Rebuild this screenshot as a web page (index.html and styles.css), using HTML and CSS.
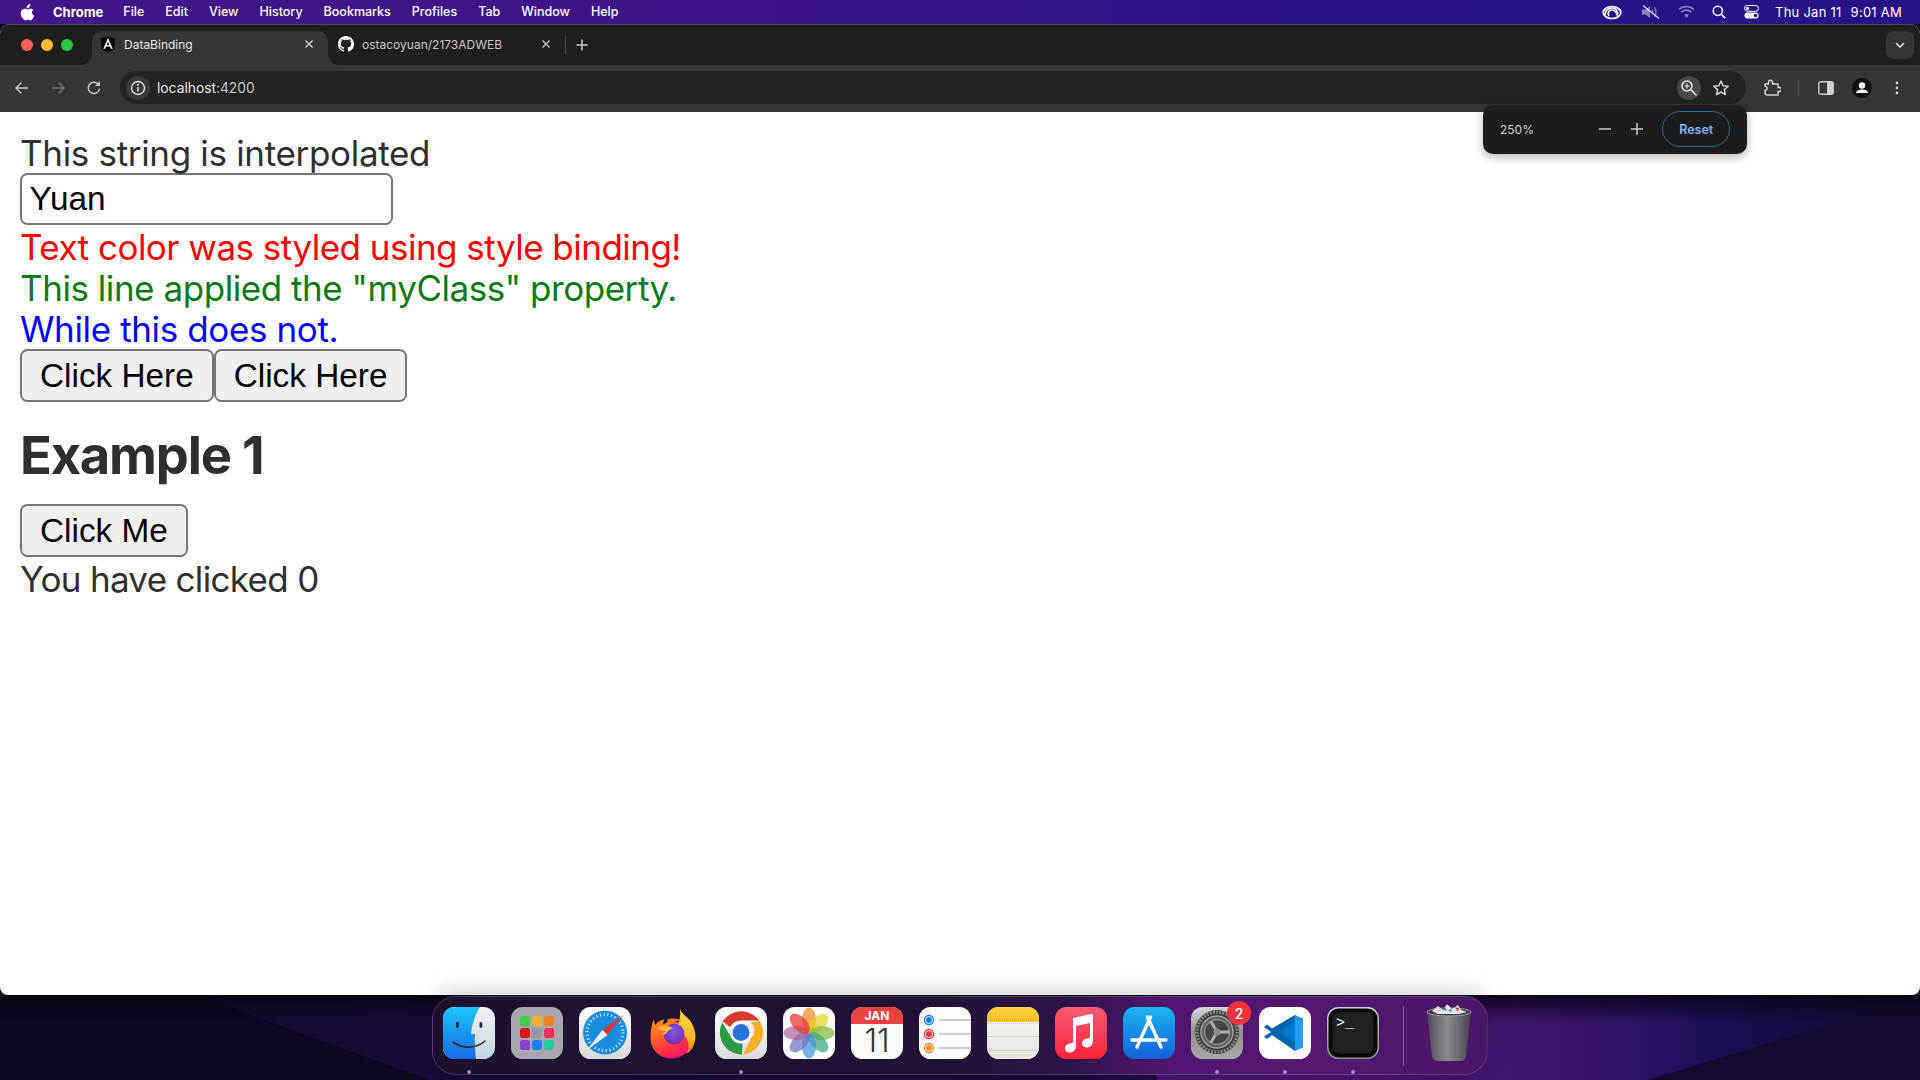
FILE: index.html
```html
<!DOCTYPE html>
<html lang="en">
<head>
<meta charset="utf-8">
<title>DataBinding</title>
<link rel="stylesheet" href="styles.css">
</head>
<body>
<div class="desktop">
  <header class="menubar">
    <div class="menu-left">
      <svg class="apple" width="15" height="18" viewBox="0 0 15 18"><path fill="#fff" d="M10.4 1c.1 1.200-.4 2.200-1 3-.7.800-1.700 1.400-2.700 1.300C6.500 4.200 7 3.100 7.600 2.400 8.300 1.600 9.500 1 10.400 1zM13.800 6.400c-1.100.7-1.800 1.700-1.800 3 0 1.500.9 2.700 2.300 3.200-.4 1.100-.9 2.100-1.600 3-.6.900-1.300 1.800-2.300 1.800s-1.300-.6-2.500-.6-1.600.6-2.500.6c-1 0-1.800-1-2.400-1.900C1.300 14 .6 11.900.8 10c.1-2.400 1.800-4.200 3.900-4.200 1.100 0 2 .7 2.700.7s1.700-.8 3-.8c1.400 0 2.600.6 3.400 1.700z"/></svg>
      <span class="menu-app">Chrome</span>
      <nav class="menu-items"><span>File</span><span>Edit</span><span>View</span><span>History</span><span>Bookmarks</span><span>Profiles</span><span>Tab</span><span>Window</span><span>Help</span></nav>
    </div>
    <div class="menu-right">
      <svg class="st-cc" width="20" height="16" viewBox="0 0 20 16"><g fill="none" stroke="#fff" stroke-width="1.700"><ellipse cx="10" cy="8.500" rx="8.800" ry="6"/><path d="M3 11c0-4 3-7 7-7s5 2 6 6M7 12c-2-3 0-6 3-6s4 2 6 6" /></g></svg>
      <svg class="st-mute" width="20" height="14" viewBox="0 0 20 14"><path fill="#8a80c4" d="M1 4.500h3.500L9 1v12L4.500 9.500H1z"/><path fill="none" stroke="#8a80c4" stroke-width="1.300" d="M11 4.500c1 1.500 1 3.500 0 5M13.500 2.500c2 2.500 2 6.500 0 9"/><path stroke="#e9e6f7" stroke-width="1.100" d="M2 .5l16 13"/></svg>
      <svg class="st-wifi" width="17" height="13" viewBox="0 0 17 13"><g fill="none" stroke="#8a80c4" stroke-width="1.600"><path d="M1 4.500c4.200-4 10.800-4 15 0"/><path d="M3.500 7c2.800-2.500 7.200-2.500 10 0"/></g><circle cx="8.500" cy="10.500" r="1.700" fill="#8a80c4"/></svg>
      <svg class="st-search" width="14" height="14" viewBox="0 0 14 14"><circle cx="5.800" cy="5.800" r="4.600" fill="none" stroke="#fff" stroke-width="1.500"/><path stroke="#fff" stroke-width="1.700" d="M9 9l4.200 4.200"/></svg>
      <svg class="st-ctrl" width="15" height="14" viewBox="0 0 15 14"><rect x=".5" y=".5" width="14" height="5.800" rx="2.900" fill="none" stroke="#fff"/><circle cx="3.500" cy="3.400" r="1.600" fill="#fff"/><rect x=".5" y="7.500" width="14" height="6" rx="3" fill="#fff"/><circle cx="11.500" cy="10.500" r="1.800" fill="#27138a"/></svg>
      <span class="clock"><span>Thu Jan 11</span><span>9:01 AM</span></span>
    </div>
  </header>

  <main class="window">
    <div class="tabstrip">
      <div class="lights"><i class="light red"></i><i class="light yellow"></i><i class="light green"></i></div>
      <div class="tab active">
        <svg width="16" height="17" viewBox="0 0 16 17"><path fill="#0c0c0f" d="M8 0l7.600 2.700-1.200 10L8 16.600 1.600 12.700.4 2.700z"/><path fill="#fff" d="M8 2L3.300 12.800h1.800l.9-2.400h4l.9 2.400h1.800zM8 5.800l1.400 3.200H6.600z"/></svg>
        <span class="tab-title">DataBinding</span>
        <svg class="tab-x" width="10" height="10" viewBox="0 0 10 10"><path stroke="#d8d8d8" stroke-width="1.300" d="M1.500 1.500l7 7M8.500 1.500l-7 7"/></svg>
      </div>
      <div class="tab">
        <svg width="16" height="16" viewBox="0 0 16 16"><path fill="#fff" d="M8 0C3.580 0 0 3.580 0 8c0 3.540 2.290 6.530 5.470 7.590.4.070.55-.17.55-.38 0-.19-.01-.82-.01-1.490-2.010.37-2.530-.49-2.690-.94-.09-.23-.48-.94-.82-1.130-.28-.15-.68-.52-.01-.53.630-.01 1.080.58 1.230.82.720 1.210 1.870.87 2.330.66.070-.52.280-.87.510-1.070-1.780-.2-3.640-.89-3.640-3.950 0-.87.310-1.590.82-2.150-.08-.2-.36-1.020.08-2.120 0 0 .67-.21 2.200.82.640-.18 1.320-.27 2-.27s1.360.09 2 .27c1.530-1.040 2.200-.82 2.200-.82.440 1.100.16 1.920.08 2.120.51.560.82 1.270.82 2.150 0 3.070-1.870 3.750-3.650 3.950.29.250.54.730.54 1.480 0 1.070-.01 1.930-.01 2.200 0 .21.150.46.55.38A8.010 8.010 0 0016 8c0-4.420-3.580-8-8-8z"/></svg>
        <span class="tab-title dim">ostacoyuan/2173ADWEB</span>
        <svg class="tab-x" width="10" height="10" viewBox="0 0 10 10"><path stroke="#c4c4c4" stroke-width="1.300" d="M1.500 1.500l7 7M8.500 1.500l-7 7"/></svg>
      </div>
      <i class="tab-sep"></i>
      <svg class="newtab" width="12" height="12" viewBox="0 0 12 12"><path stroke="#c8c8c8" stroke-width="1.500" d="M6 .5v11M.5 6h11"/></svg>
      <div class="tab-menu"><svg width="10" height="6" viewBox="0 0 10 6"><path fill="none" stroke="#e0e0e0" stroke-width="1.600" d="M1 1l4 4 4-4"/></svg></div>
    </div>
    <div class="toolbar">
      <svg class="nav" width="16" height="14" viewBox="0 0 16 14"><path fill="none" stroke="#c4c4c4" stroke-width="1.500" d="M14 7H2M7.500 1.500L2 7l5.500 5.500"/></svg>
      <svg class="nav" width="16" height="14" viewBox="0 0 16 14"><path fill="none" stroke="#6f6f6f" stroke-width="1.500" d="M2 7h12M8.500 1.500L14 7l-5.500 5.500"/></svg>
      <svg class="nav" width="16" height="16" viewBox="0 0 16 16"><path fill="none" stroke="#c4c4c4" stroke-width="1.500" d="M13.600 8.500a5.700 5.700 0 11-1.500-4.500"/><path fill="#c4c4c4" d="M14 1v5H9z"/></svg>
      <div class="omnibox">
        <div class="site-info"><svg width="16" height="16" viewBox="0 0 16 16"><circle cx="8" cy="8" r="6.500" fill="none" stroke="#dcdcdc" stroke-width="1.400"/><path stroke="#dcdcdc" stroke-width="1.500" d="M8 7v4.500"/><circle cx="8" cy="4.800" r="1" fill="#dcdcdc"/></svg></div>
        <span class="url">localhost<span class="url-port">:4200</span></span>
        <div class="zoom-chip"><svg width="18" height="18" viewBox="0 0 18 18"><circle cx="7" cy="7" r="5" fill="none" stroke="#e2e2e2" stroke-width="1.500"/><path stroke="#e2e2e2" stroke-width="1.600" d="M10.800 10.800l5.700 5.700"/><path stroke="#e2e2e2" stroke-width="1.200" d="M7 4.500v5M4.500 7h5"/></svg></div>
        <svg class="star" width="18" height="18" viewBox="0 0 18 18"><path fill="none" stroke="#d6d6d6" stroke-width="1.500" stroke-linejoin="round" d="M9 2l2.100 4.700 5.100.5-3.900 3.400 1.200 5L9 13l-4.500 2.600 1.200-5-3.900-3.400 5.100-.5z"/></svg>
      </div>
      <svg class="tool ext" width="18" height="18" viewBox="0 0 18 18"><path fill="none" stroke="#d0d0d0" stroke-width="1.500" stroke-linejoin="round" d="M2 5h3.500V3.200a2 2 0 014 0V5H15v3.500h1.400a2 2 0 010 4H15V16H4.500A2.500 2.500 0 012 13.500v-2.300a2 2 0 000-4z"/></svg>
      <i class="tool-sep"></i>
      <svg class="tool panel" width="16" height="14" viewBox="0 0 16 14"><rect x=".8" y=".8" width="14.400" height="12.400" rx="2" fill="none" stroke="#d0d0d0" stroke-width="1.400"/><path fill="#d0d0d0" d="M9 1h5a1.500 1.500 0 011.300 1.500v9A1.500 1.500 0 0114 13H9z"/></svg>
      <svg class="tool avatar" width="20" height="20" viewBox="0 0 20 20"><circle cx="10" cy="10" r="10" fill="#111"/><circle cx="10" cy="7.500" r="3.200" fill="#fff"/><path fill="#fff" d="M3.800 15c1-2.600 3.300-3.500 6.200-3.500s5.200.9 6.200 3.500z"/></svg>
      <svg class="tool dots" width="4" height="14" viewBox="0 0 4 14"><g fill="#cfcfcf"><circle cx="2" cy="2" r="1.400"/><circle cx="2" cy="7" r="1.400"/><circle cx="2" cy="12" r="1.400"/></g></svg>
    </div>
    <div class="zoom-popup">
      <span class="zoom-level">250%</span>
      <svg class="zoom-minus" width="12" height="2" viewBox="0 0 12 2"><path stroke="#cfcfcf" stroke-width="1.500" d="M0 1h12"/></svg>
      <svg class="zoom-plus" width="12" height="12" viewBox="0 0 12 12"><path stroke="#cfcfcf" stroke-width="1.500" d="M6 0v12M0 6h12"/></svg>
      <span class="zoom-reset">Reset</span>
    </div>
    <div class="page">
      <div class="line first-line">This string is interpolated</div>
      <input class="name-input" type="text" value="Yuan">
      <div class="line red-text">Text color was styled using style binding!</div>
      <div class="line green-text">This line applied the "myClass" property.</div>
      <div class="line blue-text">While this does not.</div>
      <div class="btn-row"><button class="btn">Click Here</button><button class="btn">Click Here</button></div>
      <h2 class="heading">Example 1</h2>
      <button class="btn">Click Me</button>
      <div class="line count-line">You have clicked 0</div>
    </div>
  </main>

  <footer class="dock">
    <div class="app running"><svg width="52" height="52" viewBox="0 0 52 52"><defs><linearGradient id="fa" x1="0" y1="0" x2="0" y2="1"><stop offset="0" stop-color="#1cc4fb"/><stop offset="1" stop-color="#1a6ae6"/></linearGradient><linearGradient id="fb" x1="0" y1="0" x2="0" y2="1"><stop offset="0" stop-color="#f2f2f4"/><stop offset="1" stop-color="#c6d3e0"/></linearGradient><clipPath id="fc"><rect width="52" height="52" rx="11.500"/></clipPath></defs><g clip-path="url(#fc)"><rect width="52" height="52" fill="url(#fb)"/><path fill="url(#fa)" d="M0 0h37c-4 6-8 16-9 27h4c-.500 8 0 17 1 25H0z"/></g><path fill="none" stroke="#2a2a30" stroke-width="1.600" stroke-linecap="round" d="M10 35c9 7 23 7 32-1"/><rect x="13" y="15" width="2.800" height="6" rx="1.400" fill="#1f2a3a"/><rect x="36.500" y="15" width="2.800" height="6" rx="1.400" fill="#1f2a3a"/></svg></div>
    <div class="app"><svg width="52" height="52" viewBox="0 0 52 52"><rect width="52" height="52" rx="11.500" fill="#aaa6af"/><rect x="9" y="9" width="10" height="10" rx="2.500" fill="#3fce4a"/><rect x="21" y="9" width="10" height="10" rx="2.500" fill="#f6b029"/><rect x="33" y="9" width="10" height="10" rx="2.500" fill="#ee8120"/><rect x="9" y="21" width="10" height="10" rx="2.500" fill="#d8171d"/><rect x="21" y="21" width="10" height="10" rx="2.500" fill="#8f9a9e"/><rect x="33" y="21" width="10" height="10" rx="2.500" fill="#ee2f5c"/><rect x="9" y="33" width="10" height="10" rx="2.500" fill="#8a3fcf"/><rect x="21" y="33" width="10" height="10" rx="2.500" fill="#1a83f4"/><rect x="33" y="33" width="10" height="10" rx="2.500" fill="#26c6a0"/></svg></div>
    <div class="app"><svg width="52" height="52" viewBox="0 0 52 52"><defs><linearGradient id="sb" x1="0" y1="0" x2="0" y2="1"><stop offset="0" stop-color="#fff"/><stop offset="1" stop-color="#d9d9dc"/></linearGradient></defs><rect width="52" height="52" rx="11.500" fill="url(#sb)"/><circle cx="26" cy="25.500" r="22" fill="#1c8ce0"/><circle cx="26" cy="25.500" r="18" fill="none" stroke="#fff" stroke-width="3" stroke-dasharray="1 2.770" opacity=".9"/><path fill="#e8342c" d="M44 8L28.500 28 23.500 23z"/><path fill="#f4f4f4" d="M8 43l15.500-20 5 5z"/></svg></div>
    <div class="app"><svg width="52" height="52" viewBox="0 0 52 52"><defs><linearGradient id="ffa" x1=".1" y1="0" x2=".6" y2="1"><stop offset="0" stop-color="#ff9a1f"/><stop offset=".45" stop-color="#ff5a2a"/><stop offset=".8" stop-color="#ff2a4a"/><stop offset="1" stop-color="#f0146e"/></linearGradient><linearGradient id="ffy" x1="0" y1="0" x2="0" y2="1"><stop offset="0" stop-color="#ffe14a"/><stop offset=".7" stop-color="#ffb01f"/><stop offset="1" stop-color="#ff6a2a"/></linearGradient><radialGradient id="ffp" cx=".5" cy=".4" r=".6"><stop offset="0" stop-color="#7b5bd9"/><stop offset="1" stop-color="#7a2bb5"/></radialGradient></defs><path fill="url(#ffa)" d="M7 12c0 3 .500 5 1.500 6 2-3.500 5-5 9-5.500-1.500 2-1.500 3.500-1 5 4-4 14-4 21 1 6 4 9 11 7 18-2 9-11 15-20 15-12 0-21-9-21-21 0-7 1-13 3.500-18.500z"/><path fill="url(#ffy)" d="M33 1c1 6 7 8 11 14 4 7 6 14 3 22-1 4-4 8-8 10 4-6 3-13-1-18-2-3-6-6-9-7 3-5 5-13 4-21z"/><circle cx="27" cy="27" r="10.500" fill="url(#ffp)"/><path fill="#ffbe34" d="M10 21c5-3 12-3 16 .5-3 .5-5 2-6 3.500-1 2-3 3-6 2 3-1 4-2 4-3-3 0-6-1-8-3z"/><path fill="#ff7a1f" d="M20 13c4-2 10-2 15 1-6-.5-11 1-13 5z"/></svg></div>
    <div class="app running"><svg width="52" height="52" viewBox="0 0 52 52"><defs><linearGradient id="cb" x1="0" y1="0" x2="0" y2="1"><stop offset="0" stop-color="#fff"/><stop offset="1" stop-color="#dcdcdf"/></linearGradient></defs><rect width="52" height="52" rx="11.500" fill="url(#cb)"/><path fill="#d93a30" d="M7.800 14.500A22 22 0 0144.200 13.500H26a12.500 12.500 0 00-11 6.500z"/><path fill="#f5b026" d="M44.700 14A22 22 0 0128 47.400L37 30a10 10 0 00-1.500-14.500z"/><path fill="#2f9a46" d="M27 47.500A22 22 0 017.300 15.500L16.500 31a10 10 0 0011 5z"/><circle cx="26" cy="25.500" r="11" fill="#fff"/><circle cx="26" cy="25.500" r="8.500" fill="#2b72e0"/></svg></div>
    <div class="app"><svg width="52" height="52" viewBox="0 0 52 52"><rect width="52" height="52" rx="11.500" fill="#fff"/><g transform="translate(26 26)" fill-opacity=".72"><ellipse cy="-13" rx="7" ry="12.500" fill="#f08a24"/><ellipse cy="-13" rx="7" ry="12.500" fill="#e6d321" transform="rotate(45)"/><ellipse cy="-13" rx="7" ry="12.500" fill="#7fb83a" transform="rotate(90)"/><ellipse cy="-13" rx="7" ry="12.500" fill="#3fa57c" transform="rotate(135)"/><ellipse cy="-13" rx="7" ry="12.500" fill="#3d97d8" transform="rotate(180)"/><ellipse cy="-13" rx="7" ry="12.500" fill="#6d6fc2" transform="rotate(225)"/><ellipse cy="-13" rx="7" ry="12.500" fill="#a9649f" transform="rotate(270)"/><ellipse cy="-13" rx="7" ry="12.500" fill="#e5352c" transform="rotate(315)"/></g></svg></div>
    <div class="app"><svg class="cal" width="52" height="52" viewBox="0 0 52 52"><defs><clipPath id="cal"><rect width="52" height="52" rx="11.500"/></clipPath></defs><g clip-path="url(#cal)"><rect width="52" height="52" fill="#fbfbfb"/><rect width="52" height="17" fill="#ee4242"/></g><text class="cal-month" x="26" y="13" text-anchor="middle">JAN</text><text class="cal-day" x="26" y="45" text-anchor="middle">11</text></svg></div>
    <div class="app"><svg width="52" height="52" viewBox="0 0 52 52"><rect width="52" height="52" rx="11.500" fill="#fcfcfc"/><g fill="none" stroke-width="1.300"><circle cx="10" cy="13" r="4.500" stroke="#1a7ff0"/><circle cx="10" cy="27" r="4.500" stroke="#ef3b3b"/><circle cx="10" cy="41" r="4.500" stroke="#f08a24"/></g><circle cx="10" cy="13" r="3" fill="#1a7ff0"/><circle cx="10" cy="27" r="3" fill="#ef3b3b"/><circle cx="10" cy="41" r="3" fill="#f08a24"/><path stroke="#d0d0d0" stroke-width="1.800" d="M20 13h32M20 27h32M20 41h32"/></svg></div>
    <div class="app"><svg width="52" height="52" viewBox="0 0 52 52"><defs><clipPath id="no"><rect width="52" height="52" rx="11.500"/></clipPath><linearGradient id="nob" x1="0" y1="0" x2="0" y2="1"><stop offset="0" stop-color="#fafaf6"/><stop offset="1" stop-color="#e6e3dc"/></linearGradient><linearGradient id="noy" x1="0" y1="0" x2="0" y2="1"><stop offset="0" stop-color="#ffd53d"/><stop offset="1" stop-color="#fbbd22"/></linearGradient></defs><g clip-path="url(#no)"><rect width="52" height="52" fill="url(#nob)"/><rect width="52" height="15" fill="url(#noy)"/><path stroke="#c9c6c0" stroke-width="1" stroke-dasharray="1 1" d="M0 16.500h52"/><path stroke="#d2d0ca" stroke-width="1.200" d="M0 29.500h52M0 43.500h52"/></g></svg></div>
    <div class="app"><svg width="52" height="52" viewBox="0 0 52 52"><defs><linearGradient id="mu" x1="0" y1="0" x2="0" y2="1"><stop offset="0" stop-color="#fb5c74"/><stop offset="1" stop-color="#fa233b"/></linearGradient></defs><rect width="52" height="52" rx="11.500" fill="url(#mu)"/><path fill="#fff" d="M38 8v26c0 4-3 6.500-6.500 6.500-2.500 0-4.500-1.500-4.500-4 0-3 2.500-4.500 5-5l3-.7V16l-14 3v20c0 4-3 6.500-6.500 6.500-2.500 0-4.500-1.500-4.500-4 0-3 2.500-4.500 5-5l3-.7V12.500c0-1 .500-1.500 1.500-1.800L36 7c1.200-.3 2 .0 2 1z"/></svg></div>
    <div class="app"><svg width="52" height="52" viewBox="0 0 52 52"><defs><linearGradient id="as" x1="0" y1="0" x2="0" y2="1"><stop offset="0" stop-color="#1cb4f3"/><stop offset="1" stop-color="#1561d8"/></linearGradient></defs><rect width="52" height="52" rx="11.500" fill="url(#as)"/><g stroke="#fff" stroke-width="3.400" stroke-linecap="round"><path d="M27.500 10L14 40M24.500 10L38 40M9 33h34"/></g></svg></div>
    <div class="app running"><svg width="52" height="52" viewBox="0 0 52 52"><defs><linearGradient id="st" x1="0" y1="0" x2="0" y2="1"><stop offset="0" stop-color="#cfd6d9"/><stop offset=".5" stop-color="#8e9093"/><stop offset="1" stop-color="#a9a9ab"/></linearGradient></defs><rect width="52" height="52" rx="11.500" fill="url(#st)"/><circle cx="26" cy="25" r="22" fill="#3f3f42"/><circle cx="26" cy="25" r="20" fill="none" stroke="#8a8a8d" stroke-width="3" stroke-dasharray="1.800 1.400"/><circle cx="26" cy="25" r="16" fill="#5f5f62"/><circle cx="26" cy="25" r="16" fill="none" stroke="#a5a5a8" stroke-width="1.400"/><circle cx="26" cy="25" r="12.500" fill="#47474a" stroke="#8e8e91" stroke-width="1.400"/><g transform="rotate(-30 26 25)"><path stroke="#a9a9ac" stroke-width="3" d="M26 25V13M26 25l10.500 6M26 25l-10.500 6"/></g><circle cx="26" cy="25" r="3.500" fill="#8d8d90"/></svg><span class="badge">2</span></div>
    <div class="app running"><svg width="52" height="52" viewBox="0 0 52 52"><rect width="52" height="52" rx="11.500" fill="#fff"/><path fill="#0065a9" d="M36 8v36L13 28l-5 4-3-2.500L12 25 5 20l3-2.500 5 4z"/><path fill="#1f9cf0" d="M36 8l8 3.500v29L36 44z"/><path fill="#007acc" d="M36 14.500v21L21 25z"/></svg></div>
    <div class="app running"><svg width="52" height="52" viewBox="0 0 52 52"><defs><linearGradient id="tb" x1="0" y1="0" x2="0" y2="1"><stop offset="0" stop-color="#c9d4d8"/><stop offset="1" stop-color="#8a8a8a"/></linearGradient></defs><rect width="52" height="52" rx="11.500" fill="url(#tb)"/><rect x="1.500" y="1.500" width="49" height="49" rx="10" fill="#0b0b0b"/><rect x="5.500" y="5.500" width="41" height="41" rx="7" fill="#232323"/><text class="term-text" x="9" y="20">&gt;_</text></svg></div>
    <i class="dock-sep"></i>
    <div class="app trash"><svg width="46" height="58" viewBox="0 0 46 58"><defs><linearGradient id="tr" x1="0" y1="0" x2="1" y2="0"><stop offset="0" stop-color="#4e4a55"/><stop offset=".45" stop-color="#8b8a90"/><stop offset="1" stop-color="#4a4650"/></linearGradient></defs><path fill="url(#tr)" d="M1 9h44l-5 44c-.4 3-2.500 5-6 5H12c-3.500 0-5.600-2-6-5z"/><ellipse cx="23" cy="9" rx="22" ry="4" fill="#3d3a44" stroke="#a5a4aa" stroke-width="1"/><path fill="#e5e5e8" d="M6 8l6-5 5 4 4-6 5 5 6-4 3 5 6 2-8 2H12z"/><path fill="#3f6bb0" d="M16 6l3-2 2 4z"/><path fill="#b04040" d="M29 4l4 1-1 4z"/><path fill="#2f9aa0" d="M22 7l3-1 1 3z"/></svg></div>
  </footer>
</div>
</body>
</html>
```
FILE: styles.css
```css
* { box-sizing: border-box; }
html, body { margin: 0; padding: 0; }
i { display: block; font-style: normal; }
svg { display: block; flex: none; }

.desktop {
  width: 1920px;
  height: 1080px;
  overflow: hidden;
  display: flex;
  flex-direction: column;
  align-items: center;
  font-family: "Inter", "Liberation Sans", sans-serif;
  background:
    linear-gradient(rgba(5, 2, 14, .8), rgba(5, 2, 14, 0)) 0 995px / 100% 28px no-repeat,
    linear-gradient(163deg, transparent 95%, #170a30 95%),
    linear-gradient(to top right, #0e0520 50%, transparent 50%) 210px 1000px / 220px 80px no-repeat,
    linear-gradient(90deg, #0e0520 0, #0e0520 10.950%, #150a30 11%, #190b3a 22.400%, #1d0c42 60.200%, #4c1672 60.300%, #421770 78%, #2b1265 86%, #1a0f52 90%, #120a30 100%);
}

/* menu bar */
.menubar {
  width: 100%;
  height: 24px;
  flex: none;
  display: flex;
  justify-content: space-between;
  align-items: center;
  padding: 0 18px 1px 20px;
  color: #fff;
  font-size: 12.500px;
  font-weight: 500;
  background: linear-gradient(90deg, #44158a 0, #3a1589 40%, #2a1285 70%, #27138a 100%);
}
.menu-left, .menu-right, .menu-items, .clock { display: flex; align-items: center; }
.apple { margin-right: 18px; }
.menu-app { font-weight: 700; font-size: 13px; margin-right: 20px; }
.menu-items { gap: 21px; }
.st-cc { margin-right: 19px; }
.st-mute { margin-right: 17px; }
.st-wifi { margin-right: 17px; }
.st-search { margin-right: 18px; }
.st-ctrl { margin-right: 16px; }
.clock { gap: 9px; font-weight: 400; font-size: 13px; letter-spacing: .25px; }

/* browser window */
.window {
  position: relative;
  width: 100%;
  height: 971px;
  flex: none;
  display: flex;
  flex-direction: column;
  overflow: hidden;
  border-radius: 10px 10px 8px 8px;
  background: #fff;
}
.tabstrip {
  height: 41px;
  flex: none;
  display: flex;
  align-items: flex-end;
  padding-right: 6px;
  background: #1f1f1f;
  border-top: 1px solid #4a4a4a;
  color: #e6e6e6;
  font-size: 12px;
}
.lights { width: 92px; height: 40px; display: flex; gap: 8px; align-items: center; padding: 0 0 0 21px; }
.light { width: 12px; height: 12px; border-radius: 50%; }
.red { background: #ff5f57; }
.yellow { background: #febc2e; }
.green { background: #28c840; }
.tab {
  position: relative;
  width: 236px;
  height: 34px;
  display: flex;
  align-items: center;
  padding: 0 14px 8px 8px;
  gap: 8px;
  border-radius: 10px 10px 0 0;
}
.tab.active { background: #363636; }
.tab.active::before,
.tab.active::after {
  content: "";
  position: absolute;
  bottom: 0;
  width: 10px;
  height: 10px;
}
.tab.active::before { left: -10px; background: radial-gradient(circle at 0 0, transparent 9.500px, #363636 10px); }
.tab.active::after { right: -10px; background: radial-gradient(circle at 100% 0, transparent 9.500px, #363636 10px); }
.tab:not(.active) { width: 237px; padding-left: 10px; padding-right: 14px; }
.tab-title { flex: 1; white-space: nowrap; }
.tab-title.dim { color: #c9c9c9; }
.tab-sep { width: 1px; height: 18px; margin: 0 0 11px 0; background: #4c4c4c; }
.newtab { margin: 0 0 14px 10px; }
.tab-menu {
  width: 28px;
  height: 28px;
  margin: 0 0 6px auto;
  display: flex;
  align-items: center;
  justify-content: center;
  border-radius: 8px;
  background: #353535;
}
.toolbar {
  height: 47px;
  flex: none;
  display: flex;
  align-items: center;
  padding: 0 20px 2px 14px;
  background: #363636;
  color: #e8e8e8;
  font-size: 13px;
}
.nav { margin-right: 20px; }
.omnibox {
  width: 1626px;
  height: 33px;
  display: flex;
  align-items: center;
  padding: 0 16px 0 6px;
  margin-left: -2px;
  border-radius: 17px;
  background: #232323;
}
.site-info {
  width: 24px;
  height: 24px;
  display: flex;
  align-items: center;
  justify-content: center;
  border-radius: 50%;
  background: #3a3a3a;
}
.url { margin-left: 7px; flex: 1; font-size: 13.800px; }
.url-port { color: #c9c9c9; }
.zoom-chip {
  width: 24px;
  height: 24px;
  display: flex;
  align-items: center;
  justify-content: center;
  border-radius: 50%;
  background: #4a4a4a;
  margin-right: 11px;
}
.ext { margin-left: 17px; }
.tool-sep { width: 1px; height: 16px; margin: 0 19px 0 17px; background: #5a5a5a; }
.panel { margin-right: 18px; }
.avatar { margin-right: 23px; }

/* zoom bubble */
.zoom-popup {
  position: absolute;
  left: 1483px;
  top: 81px;
  width: 264px;
  height: 49px;
  display: flex;
  align-items: center;
  padding: 0 17px 1px;
  border-radius: 10px;
  background: #1d1d1d;
  box-shadow: 0 3px 10px rgba(0, 0, 0, .3);
  color: #d4d4d4;
  font-size: 12px;
}
.zoom-level { width: 100px; }
.zoom-minus { margin-right: 20px; }
.zoom-plus { margin-right: 19px; }
.zoom-reset {
  width: 68px;
  height: 36px;
  display: flex;
  align-items: center;
  justify-content: center;
  border: 1px solid #1d6da3;
  border-radius: 18px;
  color: #8ab4f8;
  font-weight: 600;
  font-size: 12.500px;
}

/* page */
.page {
  flex: 1;
  padding: 21px 20px 20px;
  color: #2f2f2f;
  font-size: 35px;
  line-height: 42px;
}
.line { line-height: 41px; height: 41px; white-space: nowrap; }
.first-line { height: 40px; line-height: 40px; letter-spacing: -.32px; }
.name-input {
  display: block;
  width: 373px;
  height: 52px;
  margin-bottom: 2px;
  padding: 2.500px 5px;
  padding-left: 7.500px;
  border: 2.500px solid #767676;
  border-radius: 7.500px;
  background: #fff;
  color: #000;
  font-family: "Liberation Sans", Arial, sans-serif;
  font-size: 33.330px;
}
.btn-row { display: flex; margin-top: -1px; }
.btn {
  display: block;
  height: 53px;
  padding: 2.500px 18px;
  border: 2.500px solid #767676;
  border-radius: 7.500px;
  background: #efefef;
  color: #000;
  font-family: "Liberation Sans", Arial, sans-serif;
  font-size: 33.330px;
  white-space: nowrap;
}
.heading {
  margin: 27px 0 22px;
  font-size: 52.500px;
  line-height: 53px;
  font-weight: 700;
  letter-spacing: -1.200px;
  color: #2f2f2f;
}
.red-text { color: #f00; letter-spacing: -.52px; }
.green-text { color: #0a7a14; letter-spacing: -.45px; }
.blue-text { color: #00f; letter-spacing: -.37px; }
.count-line { margin-top: 2px; letter-spacing: -.68px; }

/* dock */
.dock {
  position: relative;
  z-index: 1;
  width: 1056px;
  height: 79px;
  margin-top: 1px;
  flex: none;
  display: flex;
  align-items: flex-start;
  gap: 16px;
  padding: 10px 0 0 10px;
  border: 1px solid rgba(255, 255, 255, .16);
  border-radius: 24px;
  background: linear-gradient(90deg, #1e1130 0, #221336 48%, #2d1448 60%, #521672 70%, #551872 85%, #4a1666 100%);
  box-shadow: 0 -4px 26px rgba(0, 0, 0, .2);
}
.app { position: relative; width: 52px; height: 52px; flex: none; }
.running::after {
  content: "";
  position: absolute;
  left: 24px;
  top: 63px;
  width: 4px;
  height: 4px;
  border-radius: 50%;
  background: #a585c8;
}
.badge {
  position: absolute;
  left: 36px;
  top: -6px;
  width: 24px;
  height: 24px;
  display: flex;
  align-items: center;
  justify-content: center;
  border-radius: 50%;
  background: #f0323c;
  color: #fff;
  font-size: 14px;
  font-weight: 500;
}
.dock-sep { width: 1px; height: 60px; margin: -1px 6px 0 8px; background: rgba(255, 255, 255, .28); }
.trash { width: 46px; margin-top: -4px; }
.cal { overflow: visible; }
.cal-month { font: 700 12px "Inter", sans-serif; fill: #fff; }
.cal-day { font: 300 32px "Inter", sans-serif; fill: #333; }
.term-text { font: 400 15px "Liberation Mono", monospace; fill: #fff; }
```
